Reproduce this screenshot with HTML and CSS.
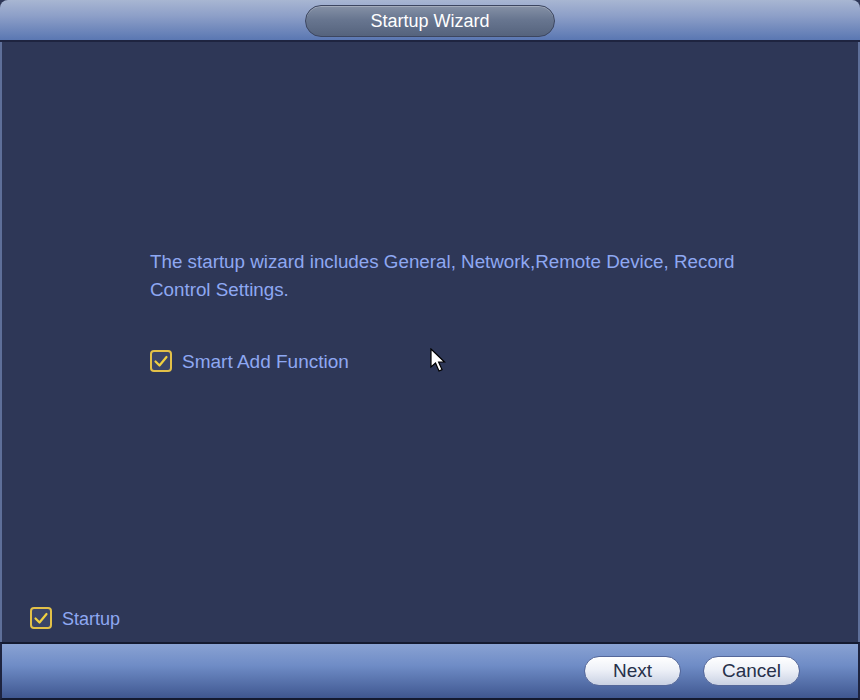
FILE: index.html
```html
<!DOCTYPE html>
<html>
<head>
<meta charset="utf-8">
<link rel="stylesheet" href="styles.css">
</head>
<body>
<div class="window">
  <div class="titlebar">
    <div class="title-pill">Startup Wizard</div>
  </div>
  <div class="content">
    <div class="main">
      <p class="message">The startup wizard includes General, Network,Remote Device, Record<br>Control Settings.</p>
      <label class="check-row">
        <span class="checkbox"><svg viewBox="0 0 22 22" width="22" height="22"><path d="M5.5 11.5 L9.5 15.5 L16.5 7" fill="none" stroke="#f0d040" stroke-width="2.2" stroke-linecap="round" stroke-linejoin="round"/></svg></span>
        <span class="check-label wide">Smart Add Function</span>
      </label>
    </div>
    <label class="check-row startup-row">
      <span class="checkbox"><svg viewBox="0 0 22 22" width="22" height="22"><path d="M5.5 11.5 L9.5 15.5 L16.5 7" fill="none" stroke="#f0d040" stroke-width="2.2" stroke-linecap="round" stroke-linejoin="round"/></svg></span>
      <span class="check-label">Startup</span>
    </label>
    <svg class="cursor" width="20" height="28" viewBox="0 0 20 28"><path d="M1 1 L1 19 L5.5 15 L9 23 L12 21.6 L8.6 14 L14.5 14 Z" fill="#ffffff" stroke="#000000" stroke-width="1.2" stroke-linejoin="miter"/></svg>
  </div>
  <div class="footer">
    <button class="btn">Next</button>
    <button class="btn">Cancel</button>
  </div>
</div>
</body>
</html>
```
FILE: styles.css
```css
html, body {
  margin: 0;
  padding: 0;
  background: #2e3757;
}
body {
  font-family: "Liberation Sans", Arial, sans-serif;
}
.window {
  width: 860px;
  height: 700px;
  display: flex;
  flex-direction: column;
  background: #2e3757;
  box-sizing: border-box;
}
.titlebar {
  height: 42px;
  flex: 0 0 42px;
  box-sizing: border-box;
  border-radius: 8px 8px 0 0;
  background: linear-gradient(to bottom, #a8b6d2 0%, #8d9fc8 40%, #5a77b2 100%);
  border-bottom: 2px solid #1e2440;
  display: flex;
  justify-content: center;
  align-items: flex-start;
  padding-top: 5px;
}
.title-pill {
  width: 250px;
  height: 32px;
  box-sizing: border-box;
  border-radius: 16px;
  background: linear-gradient(to bottom, #8591a6 0%, #687690 45%, #55637d 100%);
  border: 1px solid #3c4660;
  box-shadow: inset 0 1px 0 rgba(255,255,255,0.25);
  color: #ffffff;
  font-size: 18px;
  line-height: 30px;
  text-align: center;
}
.content {
  flex: 1;
  position: relative;
  display: flex;
  flex-direction: column;
  border-left: 2px solid #5e6f99;
  border-right: 2px solid #5e6f99;
  padding: 0 0 13px 28px;
}
.main {
  padding-left: 120px;
  padding-top: 206px;
  flex: 1;
}
.message {
  margin: 0;
  color: #8ea8f2;
  font-size: 18.8px;
  line-height: 28px;
}
.check-row {
  display: flex;
  align-items: center;
  gap: 10px;
}
.main .check-row {
  margin-top: 46px;
}
.checkbox {
  width: 22px;
  height: 22px;
  box-sizing: border-box;
  border: 2px solid #e2c048;
  border-radius: 4px;
  background: #3a4468;
  position: relative;
}
.checkbox svg {
  position: absolute;
  left: -2px;
  top: -2px;
}
.check-label {
  color: #8ea8f2;
  font-size: 18px;
  position: relative;
  top: 1px;
}
.check-label.wide {
  font-size: 19px;
}
.cursor {
  position: absolute;
  left: 428px;
  top: 306px;
}
.footer {
  height: 58px;
  flex: 0 0 58px;
  box-sizing: border-box;
  background: linear-gradient(to bottom, #89a2d3 0%, #6f8cc6 40%, #3f5790 100%);
  border-top: 2px solid #141a30;
  border-left: 2px solid #1e2440;
  border-right: 2px solid #1e2440;
  border-bottom: 2px solid #141a30;
  display: flex;
  justify-content: flex-end;
  align-items: center;
  gap: 22px;
  padding-right: 58px;
}
.btn {
  width: 97px;
  height: 30px;
  border-radius: 15px;
  border: 1px solid #54679a;
  background: linear-gradient(to bottom, #ffffff 0%, #eef1f8 45%, #c9d1e3 100%);
  color: #26304a;
  font-family: "Liberation Sans", Arial, sans-serif;
  font-size: 19px;
  padding: 0;
  line-height: 28px;
}
```
